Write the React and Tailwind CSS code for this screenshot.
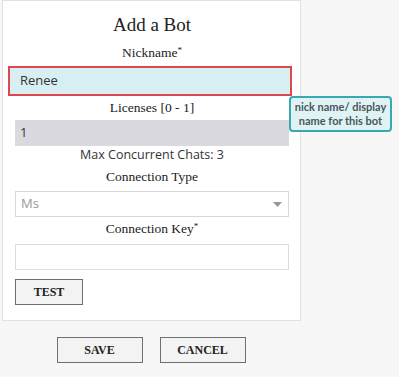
const serif = { fontFamily: '"Liberation Serif", "Times New Roman", serif' };

const AddBotDialog = () => {
  return (
    <div className="relative h-[377px] w-[399px] overflow-hidden bg-[#f7f7f7] antialiased">
      {/* Form panel */}
      <div className="ml-[2px] box-border h-[321px] w-[299px] border border-[#e1e1e1] bg-white pl-[12px] pr-[11px] pt-[12px]">
        <h1 className="text-center text-[19px] leading-[24px] text-[#222]" style={serif}>
          Add a Bot
        </h1>

        <div className="mt-[6px] text-center text-[13.5px] leading-[20px] text-[#222]" style={serif}>
          Nickname<span className="relative top-[-4px] text-[9px]">*</span>
        </div>
        <div className="ml-[-7px] mr-[-3px] mt-[2px] box-border flex h-[30px] items-center border-2 border-[#e0474c] bg-[#d7eff2] pl-[10px] font-['Open_Sans'] text-[13px] text-[#333]">
          Renee
        </div>

        <div className="mt-[2px] text-center text-[13.5px] leading-[20px] text-[#222]" style={serif}>
          <span className="text-[#222]">Licenses [0 - 1]</span>
        </div>
        <div className="mt-[2px] flex h-[26px] items-center bg-[#d9d9df] pl-[5px] font-['Open_Sans'] text-[13px] text-[#333]">
          1
        </div>

        <div className="text-center font-['Open_Sans'] text-[12.5px] leading-[18px] text-[#333]">
          Max Concurrent Chats: 3
        </div>

        <div className="mt-[3px] text-center text-[13.5px] leading-[20px] text-[#222]" style={serif}>
          Connection Type
        </div>
        <div className="mt-[4px] box-border flex h-[26px] items-center justify-between border border-[#d8d8d8] bg-white pl-[5px] pr-[6px] font-['Open_Sans'] text-[13px] text-[#999]">
          <span>Ms</span>
          <svg width="9" height="5" viewBox="0 0 9 5">
            <path d="M0 0 L9 0 L4.5 5 Z" fill="#8d9b9b" />
          </svg>
        </div>

        <div className="mt-[2px] text-center text-[13.5px] leading-[20px] text-[#222]" style={serif}>
          Connection Key<span className="relative top-[-4px] text-[9px]">*</span>
        </div>
        <div className="mt-[4px] box-border h-[26px] border border-[#dcdcdc] bg-white" />

        <button
          className="mt-[9px] box-border h-[26px] w-[68px] border border-[#6f6f6f] bg-[#f3f3f3] text-[12px] font-bold text-[#222]"
          style={serif}
        >
          TEST
        </button>
      </div>

      {/* Footer buttons */}
      <div className="mt-[16px] flex w-[302px] justify-center gap-[17px]">
        <button
          className="box-border h-[26px] w-[86px] border border-[#6f6f6f] bg-[#f3f3f3] text-[12px] font-bold text-[#222]"
          style={serif}
        >
          SAVE
        </button>
        <button
          className="box-border h-[26px] w-[86px] border border-[#6f6f6f] bg-[#f3f3f3] text-[12px] font-bold text-[#222]"
          style={serif}
        >
          CANCEL
        </button>
      </div>

      {/* Callout tooltip */}
      <div className="absolute left-[289px] top-[96px] box-border flex h-[36px] w-[103px] flex-col items-center justify-center rounded-[4px] border-2 border-[#3ba7b1] bg-[#dff3f5] font-['Lato'] text-[11px] font-bold leading-[14px] text-[#4a5659]">
        <span>nick name/ display</span>
        <span>name for this bot</span>
      </div>
    </div>
  );
};

export default function App() {
  return <AddBotDialog />;
}
